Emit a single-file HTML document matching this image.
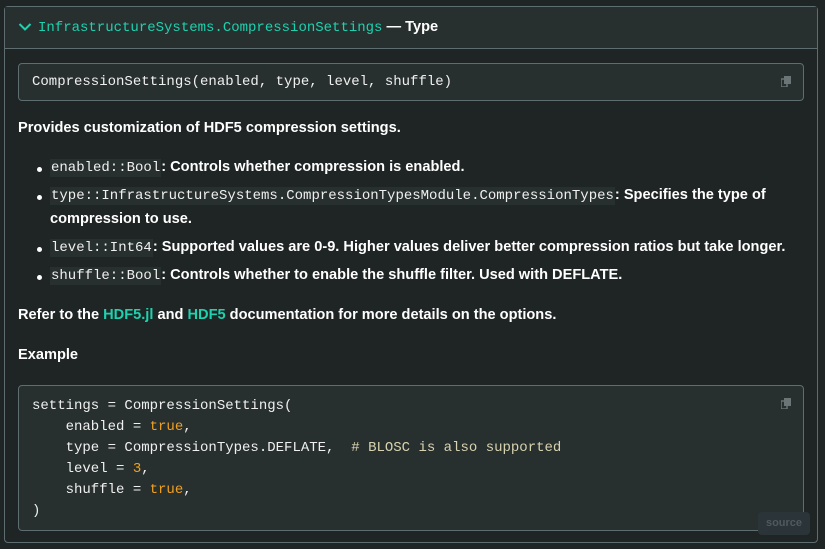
<!DOCTYPE html>
<html><head><meta charset="utf-8"><style>
html,body{margin:0;padding:0;background:#1f2424;width:825px;height:549px;overflow:hidden}
body{font-family:"Liberation Sans",sans-serif;color:#fff;font-size:14.6px;font-weight:bold}
.box{position:absolute;left:4px;top:6px;width:812px;height:535px;border:1px solid #5e6d6f;border-radius:4px;background:#1f2424}
.hdr{position:absolute;left:0;top:0;width:812px;height:41px;background:#282f2f;border-bottom:1px solid #5e6d6f}
.mono{font-family:"Liberation Mono",monospace;font-weight:normal}
.pre{position:absolute;left:13px;width:784px;background:#282f2f;border:1px solid #5e6d6f;border-radius:4px}
.t{position:absolute;left:13px;white-space:nowrap}
code{font-family:"Liberation Mono",monospace;font-weight:normal;background:#282f2f;padding:1px 1px;font-size:14px;color:#f0f0f0}
.dot{position:absolute;left:32px;width:5px;height:5px;border-radius:50%;background:#fff}
a{color:#1dd2af;text-decoration:none}
.cp{position:absolute;right:12px;width:10px;height:11px}
</style></head><body>
<div class="box">
 <div class="hdr">
  <svg style="position:absolute;left:13px;top:15px" width="14" height="10" viewBox="0 0 14 10"><path d="M1.5 2 L7 7.5 L12.5 2" stroke="#1dd2af" stroke-width="2" fill="none"/></svg>
  <div class="t" style="left:33px;top:12px;font-size:14.6px"><span class="mono" style="color:#1dd2af;font-size:14px">InfrastructureSystems.CompressionSettings</span> — Type</div>
 </div>
 <div class="pre" style="top:56px;height:36px">
  <div class="t mono" style="top:10px;font-size:14px;color:#f0f0f0">CompressionSettings(enabled, type, level, shuffle)</div>
  <svg class="cp" style="top:12px" viewBox="0 0 10 11"><rect x="0" y="3" width="6" height="8" fill="none" stroke="#6b7576" stroke-width="1.5"/><rect x="3" y="0" width="7" height="8" fill="#6b7576"/></svg>
 </div>
 <div class="t" style="top:113px">Provides customization of HDF5 compression settings.</div>
 <div class="dot" style="top:160px"></div>
 <div class="t" style="left:45px;top:152px"><code>enabled::Bool</code>: Controls whether compression is enabled.</div>
 <div class="dot" style="top:188px"></div>
 <div class="t" style="left:45px;top:180px"><code>type::InfrastructureSystems.CompressionTypesModule.CompressionTypes</code>: Specifies the type of</div>
 <div class="t" style="left:45px;top:204px">compression to use.</div>
 <div class="dot" style="top:240px"></div>
 <div class="t" style="left:45px;top:232px"><code>level::Int64</code>: Supported values are 0-9. Higher values deliver better compression ratios but take longer.</div>
 <div class="dot" style="top:268px"></div>
 <div class="t" style="left:45px;top:260px"><code>shuffle::Bool</code>: Controls whether to enable the shuffle filter. Used with DEFLATE.</div>
 <div class="t" style="top:300px">Refer to the <a>HDF5.jl</a> and <a>HDF5</a> documentation for more details on the options.</div>
 <div class="t" style="top:340px">Example</div>
 <div class="pre" style="top:378px;height:144px">
  <pre class="mono" style="position:absolute;left:13px;top:10px;margin:0;font-size:14px;line-height:21px;color:#f0f0f0">settings = CompressionSettings(
    enabled = <span style="color:#f0a020">true</span>,
    type = CompressionTypes.DEFLATE,  <span style="color:#d8d3b0"># BLOSC is also supported</span>
    level = <span style="color:#f0a020">3</span>,
    shuffle = <span style="color:#f0a020">true</span>,
)</pre>
  <svg class="cp" style="top:12px" viewBox="0 0 10 11"><rect x="0" y="3" width="6" height="8" fill="none" stroke="#6b7576" stroke-width="1.5"/><rect x="3" y="0" width="7" height="8" fill="#6b7576"/></svg>
 </div>
 <div style="position:absolute;left:753px;top:505px;width:52px;height:23px;background:#2b3438;border-radius:4px;color:#4f5a5e;font-size:11px;text-align:center;line-height:23px">source</div>
</div>
</body></html>
